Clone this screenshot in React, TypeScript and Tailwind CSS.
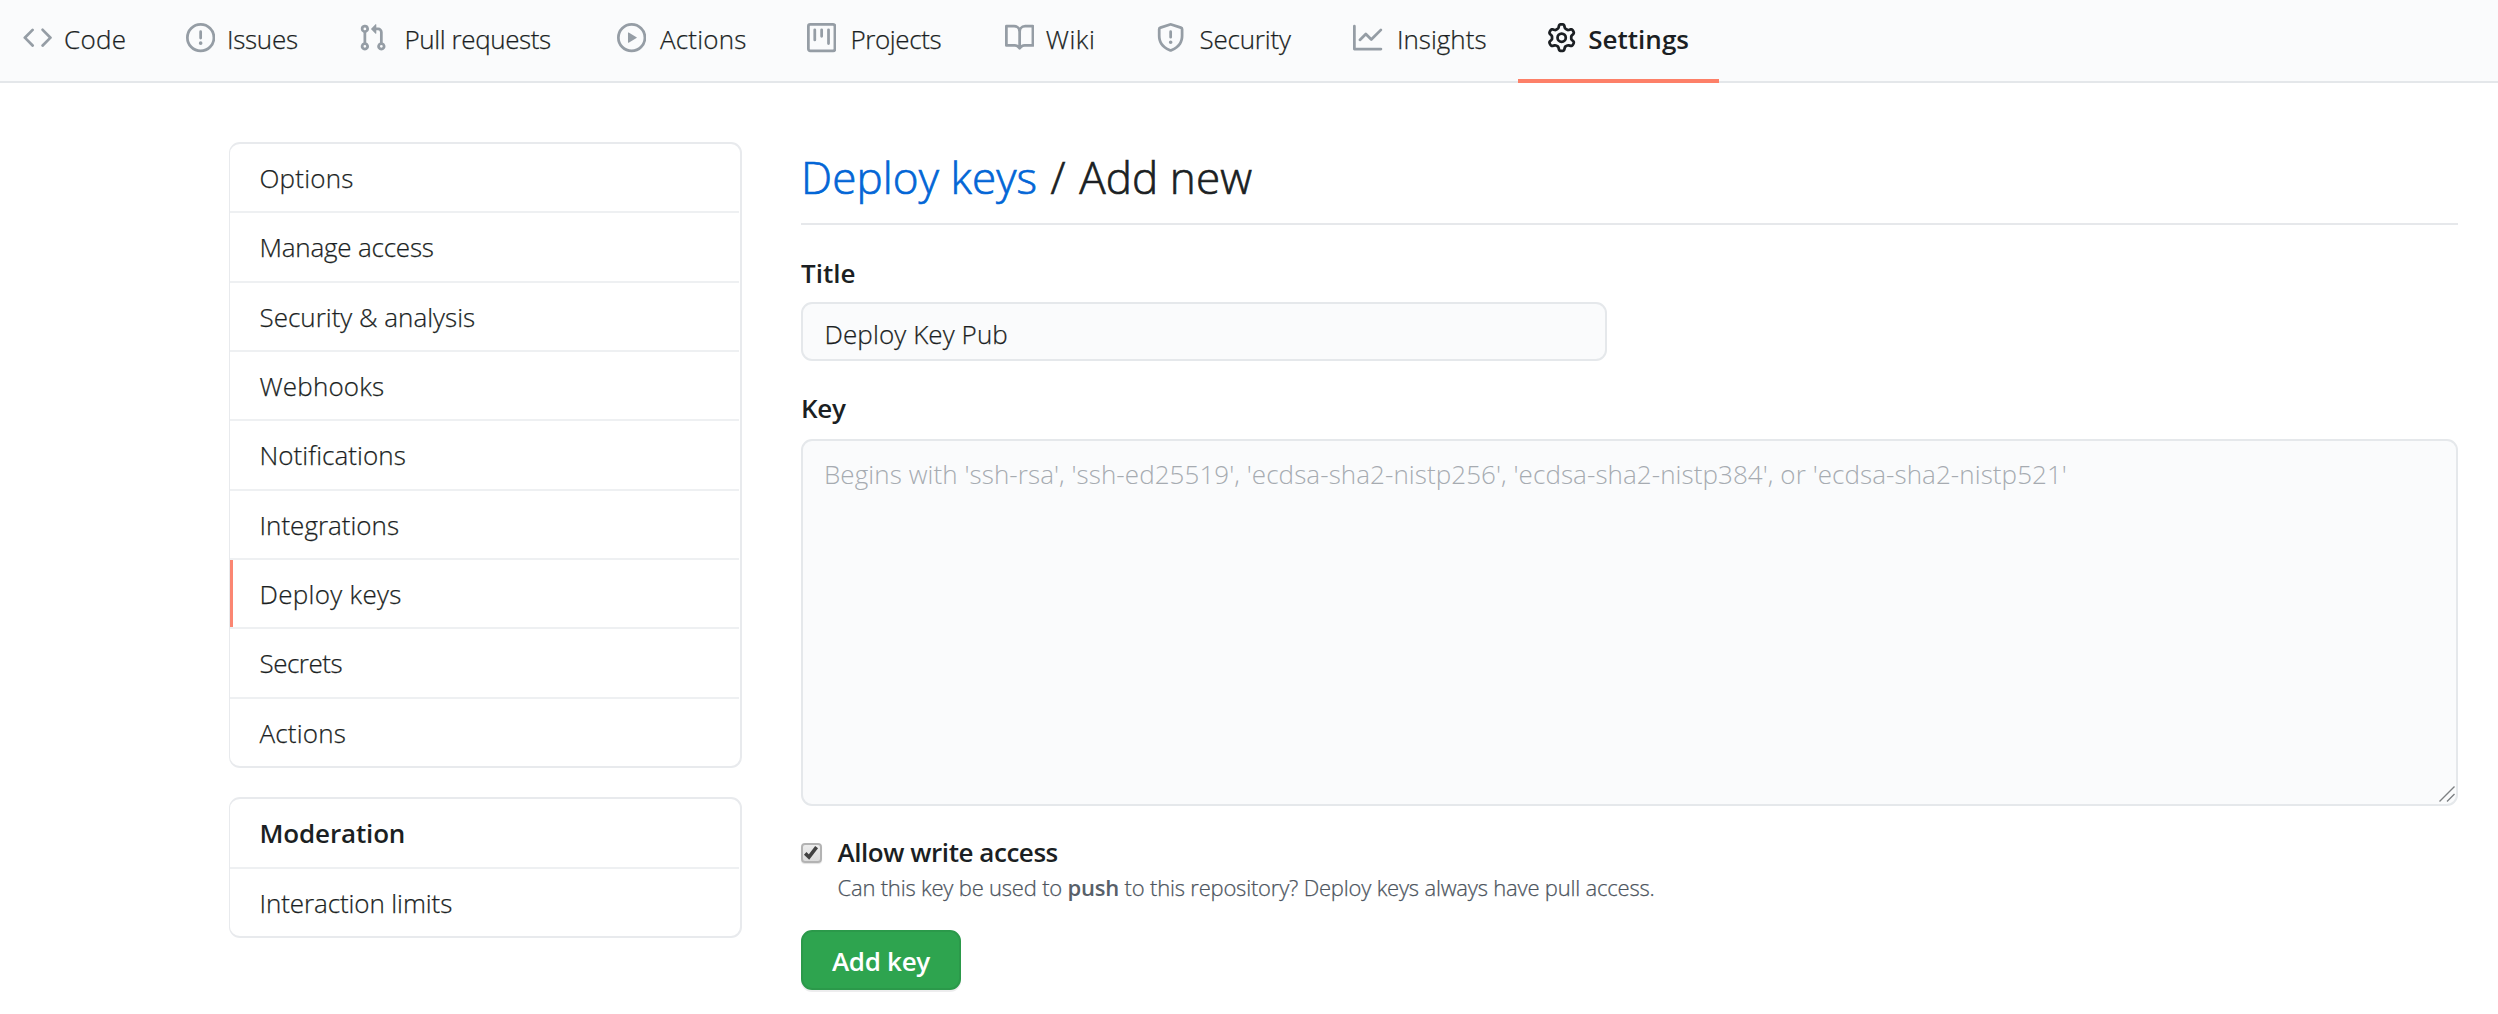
type Tab = { label: string; path: string; item: string; icon: string; text: string };

const tabs: Tab[] = [
  {
    label: "Code",
    item: "w-[163px]",
    icon: "mr-[11.7px]",
    text: "tracking-[0.3px]",
    path: "M4.72 3.22a.75.75 0 011.06 1.06L2.06 8l3.72 3.72a.75.75 0 11-1.06 1.06L.47 8.53a.75.75 0 010-1.06l4.25-4.25zm6.56 0a.75.75 0 10-1.06 1.06L13.94 8l-3.72 3.72a.75.75 0 101.06 1.06l4.25-4.25a.75.75 0 000-1.06l-4.25-4.25z",
  },
  {
    label: "Issues",
    item: "w-[171.5px]",
    icon: "mr-[11.7px]",
    text: "tracking-[-0.3px]",
    path: "M8 1.5a6.5 6.5 0 100 13 6.5 6.5 0 000-13zM0 8a8 8 0 1116 0A8 8 0 010 8zm9 3a1 1 0 11-2 0 1 1 0 012 0zm-.25-6.25a.75.75 0 00-1.5 0v3.5a.75.75 0 001.5 0v-3.5z",
  },
  {
    label: "Pull requests",
    item: "w-[259.5px]",
    icon: "mr-[17.7px]",
    text: "tracking-[-0.4px]",
    path: "M7.177 3.073L9.573.677A.25.25 0 0110 .854v4.792a.25.25 0 01-.427.177L7.177 3.427a.25.25 0 010-.354zM3.75 2.5a.75.75 0 100 1.5.75.75 0 000-1.5zm-2.25.75a2.25 2.25 0 113 2.122v5.256a2.251 2.251 0 11-1.5 0V5.372A2.25 2.25 0 011.5 3.25zM11 2.5h-1V4h1a1 1 0 011 1v5.628a2.251 2.251 0 101.5 0V5A2.5 2.5 0 0011 2.5zm1 10.25a.75.75 0 111.5 0 .75.75 0 01-1.5 0zM3.75 12a.75.75 0 100 1.5.75.75 0 000-1.5z",
  },
  {
    label: "Actions",
    item: "w-[189.5px]",
    icon: "mr-[13.7px]",
    text: "tracking-[0.2px]",
    path: "M1.5 8a6.5 6.5 0 1113 0 6.5 6.5 0 01-13 0zM8 0a8 8 0 100 16A8 8 0 008 0zM6.379 5.227A.25.25 0 006 5.442v5.117a.25.25 0 00.379.214l4.264-2.559a.25.25 0 000-.428L6.379 5.227z",
  },
  {
    label: "Projects",
    item: "w-[198px]",
    icon: "mr-[14.7px]",
    text: "tracking-[-0.4px]",
    path: "M1.75 0A1.75 1.75 0 000 1.75v12.5C0 15.216.784 16 1.75 16h12.5A1.75 1.75 0 0016 14.25V1.75A1.75 1.75 0 0014.25 0H1.75zM1.5 1.75a.25.25 0 01.25-.25h12.5a.25.25 0 01.25.25v12.5a.25.25 0 01-.25.25H1.75a.25.25 0 01-.25-.25V1.75zM11.75 3a.75.75 0 00-.75.75v7.5a.75.75 0 001.5 0v-7.5a.75.75 0 00-.75-.75zm-8.25.75a.75.75 0 011.5 0v5.5a.75.75 0 01-1.5 0v-5.5zM8 3a.75.75 0 00-.75.75v3.5a.75.75 0 001.5 0v-3.5A.75.75 0 008 3z",
  },
  {
    label: "Wiki",
    item: "w-[151.2px]",
    icon: "mr-[12px]",
    text: "tracking-[0.5px]",
    path: "M0 1.75A.75.75 0 01.75 1h4.253c1.227 0 2.317.59 3 1.501A3.744 3.744 0 0111.006 1h4.245a.75.75 0 01.75.75v10.5a.75.75 0 01-.75.75h-4.507a2.25 2.25 0 00-1.591.659l-.622.621a.75.75 0 01-1.06 0l-.622-.621A2.25 2.25 0 005.258 13H.75a.75.75 0 01-.75-.75V1.75zm8.755 3a2.25 2.25 0 012.25-2.25H14.5v9h-3.757c-.71 0-1.4.201-1.992.572l.004-7.322zm-1.504 7.324l.004-5.073-.002-2.253A2.25 2.25 0 005.003 2.5H1.5v9h3.757a3.75 3.75 0 011.994.574z",
  },
  {
    label: "Security",
    item: "w-[197.8px]",
    icon: "mr-[14.5px]",
    text: "tracking-[-0.2px]",
    path: "M7.467.133a1.75 1.75 0 011.066 0l5.25 1.68A1.75 1.75 0 0115 3.48V7c0 1.566-.32 3.182-1.303 4.682-.983 1.498-2.585 2.813-5.032 3.855a1.7 1.7 0 01-1.33 0c-2.447-1.042-4.049-2.357-5.032-3.855C1.32 10.182 1 8.566 1 7V3.48a1.75 1.75 0 011.217-1.667l5.25-1.68zm.61 1.429a.25.25 0 00-.153 0l-5.25 1.68a.25.25 0 00-.174.238V7c0 1.358.275 2.666 1.057 3.86.784 1.194 2.121 2.34 4.366 3.297a.2.2 0 00.154 0c2.245-.956 3.582-2.104 4.366-3.298C13.225 9.666 13.5 8.36 13.5 7V3.48a.25.25 0 00-.174-.237l-5.25-1.68zM9 10.5a1 1 0 11-2 0 1 1 0 012 0zm-.25-5.75a.75.75 0 10-1.5 0v3a.75.75 0 001.5 0v-3z",
  },
  {
    label: "Insights",
    item: "w-[164.5px]",
    icon: "mr-[14.2px]",
    text: "tracking-normal",
    path: "M1.5 1.75a.75.75 0 00-1.5 0v12.5c0 .414.336.75.75.75h14.5a.75.75 0 000-1.5H1.5V1.75zm14.28 2.53a.75.75 0 00-1.06-1.06L10 7.94 7.53 5.47a.75.75 0 00-1.06 0L3.22 8.72a.75.75 0 001.06 1.06L7 7.06l2.47 2.47a.75.75 0 001.06 0l5.25-5.25z",
  },
];

const gearPath =
  "M7.429 1.525a6.593 6.593 0 011.142 0c.036.003.108.036.137.146l.289 1.105c.147.56.55.967.997 1.189.174.086.341.183.501.29.417.278.97.423 1.53.27l1.102-.303c.11-.03.175.016.195.046.219.31.41.641.573.989.014.031.022.11-.059.19l-.815.806c-.411.406-.562.957-.53 1.456a4.588 4.588 0 010 .582c-.032.499.119 1.05.53 1.456l.815.806c.08.08.073.159.059.19a6.494 6.494 0 01-.573.99c-.02.029-.086.074-.195.045l-1.103-.303c-.559-.153-1.112-.008-1.529.27-.16.107-.327.204-.5.29-.449.222-.851.628-.998 1.189l-.289 1.105c-.029.11-.101.143-.137.146a6.613 6.613 0 01-1.142 0c-.036-.003-.108-.037-.137-.146l-.289-1.105c-.147-.56-.55-.967-.997-1.189a4.502 4.502 0 01-.501-.29c-.417-.278-.97-.423-1.53-.27l-1.102.303c-.11.03-.175-.016-.195-.046a6.492 6.492 0 01-.573-.989c-.014-.031-.022-.11.059-.19l.815-.806c.411-.406.562-.957.53-1.456a4.587 4.587 0 010-.582c.032-.499-.119-1.05-.53-1.456l-.815-.806c-.08-.08-.073-.159-.059-.19a6.44 6.44 0 01.573-.99c.02-.029.086-.075.195-.045l1.103.303c.559.153 1.112.008 1.529-.27.16-.107.327-.204.5-.29.449-.222.851-.628.998-1.189l.289-1.105c.029-.11.101-.143.137-.146zM8 0c-.236 0-.47.01-.701.03-.743.065-1.29.615-1.458 1.261l-.29 1.106c-.017.066-.078.158-.211.224a5.994 5.994 0 00-.668.386c-.123.082-.233.09-.3.071L3.27 2.776c-.644-.177-1.392.02-1.82.63a7.977 7.977 0 00-.704 1.217c-.315.675-.111 1.422.363 1.891l.815.806c.05.048.098.147.088.294a6.084 6.084 0 000 .772c.01.147-.038.246-.088.294l-.815.806c-.474.469-.678 1.216-.363 1.891.2.428.436.835.704 1.218.428.609 1.176.806 1.82.63l1.103-.303c.066-.019.176-.011.299.071.213.143.436.272.668.386.133.066.194.158.212.224l.289 1.106c.169.646.715 1.196 1.458 1.26a8.094 8.094 0 001.402 0c.743-.064 1.29-.614 1.458-1.26l.29-1.106c.017-.066.078-.158.211-.224a5.98 5.98 0 00.668-.386c.123-.082.233-.09.3-.071l1.102.302c.644.177 1.392-.02 1.82-.63.268-.382.505-.789.704-1.217.315-.675.111-1.422-.364-1.891l-.814-.806c-.05-.048-.098-.147-.088-.294a6.1 6.1 0 000-.772c-.01-.147.039-.246.088-.294l.814-.806c.475-.469.679-1.216.364-1.891a7.992 7.992 0 00-.704-1.218c-.428-.609-1.176-.806-1.82-.63l-1.103.303c-.066.019-.176.011-.299-.071a5.991 5.991 0 00-.668-.386c-.133-.066-.194-.158-.212-.224L10.16 1.29C9.99.645 9.444.095 8.701.031A8.094 8.094 0 008 0zm1.5 8a1.5 1.5 0 11-3 0 1.5 1.5 0 013 0zM11 8a3 3 0 11-6 0 3 3 0 016 0z";

const menu = [
  { label: "Options", text: "tracking-[0.2px]" },
  { label: "Manage access", text: "tracking-[-0.2px]" },
  { label: "Security & analysis", text: "tracking-normal" },
  { label: "Webhooks", text: "tracking-[0.15px]" },
  { label: "Notifications", text: "tracking-[0.05px]" },
  { label: "Integrations", text: "tracking-normal" },
  { label: "Deploy keys", text: "tracking-[0.3px]", selected: true },
  { label: "Secrets", text: "tracking-[-0.5px]" },
  { label: "Actions", text: "tracking-[0.2px]" },
];

function Octicon({ path, className }: { path: string; className: string }) {
  return (
    <svg viewBox="0 0 16 16" className={`size-[29.3px] shrink-0 fill-current ${className}`} aria-hidden="true">
      <path fillRule="evenodd" d={path} />
    </svg>
  );
}

function RepoNav() {
  return (
    <nav className="flex h-[83px] border-b-2 border-[#e4e7ea] bg-[#fafbfc] pl-[23px]">
      {tabs.map((t) => (
        <a key={t.label} className={`flex h-[76px] shrink-0 items-center ${t.item}`}>
          <Octicon path={t.path} className={`text-[#959da5] ${t.icon}`} />
          <span className={`pt-[2px] whitespace-nowrap ${t.text}`}>{t.label}</span>
        </a>
      ))}
      <a className="-mb-[2px] flex h-[83px] w-[201px] shrink-0 items-center border-b-4 border-[#fd8068] pb-[3px] pl-[29px] font-semibold [-webkit-text-stroke:0]">
        <Octicon path={gearPath} className="mr-[12px]" />
        <span className="pt-[2px]">Settings</span>
      </a>
    </nav>
  );
}

function Sidebar() {
  return (
    <aside className="flex w-[513px] shrink-0 flex-col gap-[29px]">
      <div className="h-[626px] overflow-hidden rounded-[11px] border-2 border-l border-[#e8eaed]">
        {menu.map((m) => (
          <a
            key={m.label}
            className="mr-px flex h-[69.33px] items-stretch border-b-2 border-[#eef0f2] last:border-b-0 last:pb-[2px]"
          >
            <span className={m.selected ? "w-[3px] bg-[#fb8672]" : "w-[3px]"} />
            <span className={`flex items-center pt-[2px] pl-[26.5px] ${m.text}`}>{m.label}</span>
          </a>
        ))}
      </div>
      <div className="h-[141px] overflow-hidden rounded-[11px] border-2 border-l border-[#e8eaed]">
        <div className="mr-px flex h-[70px] items-center border-b-2 border-[#eef0f2] pt-px pl-[29.5px] font-semibold tracking-[-0.15px] [-webkit-text-stroke:0]">
          Moderation
        </div>
        <a className="flex h-[67px] items-center pt-[2px] pl-[29.5px] tracking-[-0.1px]">Interaction limits</a>
      </div>
    </aside>
  );
}

function DeployKeyForm() {
  return (
    <main className="ml-[59px] flex w-[1657px] shrink-0 flex-col">
      <h2 className="h-[83px] border-b-2 border-[#e6e8eb] pt-px text-[44px] leading-[68px] tracking-[0.1px] [-webkit-text-stroke:0.7px]">
        <a className="mr-[2px] text-[#0366d6]">Deploy keys</a> / <span className="ml-[2px]">Add new</span>
      </h2>

      <label htmlFor="key-title" className="mt-[28px] leading-[40px] font-semibold [-webkit-text-stroke:0]">
        Title
      </label>
      <input
        id="key-title"
        defaultValue="Deploy Key Pub"
        className="mt-[9px] h-[59px] w-[806px] rounded-[11px] border-2 border-[#e5e8eb] bg-[#fafbfc] pt-[4px] pl-[21.5px] tracking-[0.1px] outline-none"
      />

      <label htmlFor="key-body" className="mt-[27px] leading-[40px] font-semibold tracking-[-0.3px] [-webkit-text-stroke:0]">
        Key
      </label>
      <div className="relative mt-[11px] h-[367px]">
        <textarea
          id="key-body"
          placeholder="Begins with 'ssh-rsa', 'ssh-ed25519', 'ecdsa-sha2-nistp256', 'ecdsa-sha2-nistp384', or 'ecdsa-sha2-nistp521'"
          className="block h-full w-full resize-none rounded-[11px] border-2 border-[#e5e8eb] bg-[#fafbfc] pt-[14px] pl-[21px] leading-[38px] tracking-[0.07px] outline-none [-webkit-text-stroke:0] placeholder:text-[#a6abb1]"
        />
        <svg viewBox="0 0 16 16" className="absolute right-[3px] bottom-[4px] size-4" fill="none" stroke="#7d8083" strokeWidth="1.4">
          <path d="M0.5 15.5 15.5 0.5M8 15.5 15.5 8" />
        </svg>
      </div>

      <div className="mt-[25px] flex">
        <span className="mt-[11.5px] flex size-[20.5px] items-center justify-center rounded-[4px] border-2 border-[#b3b3b3] bg-linear-to-b from-[#ededed] to-[#dcdcdc] shadow-[0_1px_1px_rgba(0,0,0,0.12)]">
          <svg viewBox="0 0 16 16" className="size-4" fill="none" stroke="#424242" strokeWidth="3.6">
            <path d="M2.2 8.4 6 12 13.6 2.2" />
          </svg>
        </span>
        <div className="ml-[16px] flex flex-col">
          <span className="pt-px leading-[40px] font-semibold tracking-[-0.45px] [-webkit-text-stroke:0]">Allow write access</span>
          <span className="-mt-px text-[22px] leading-[32px] tracking-[-0.2px] text-[#4d555e]">
            Can this key be used to <strong className="font-semibold text-[#586069] [-webkit-text-stroke:0]">push</strong> to this repository? Deploy keys always have pull
            access.
          </span>
        </div>
      </div>

      <button className="mt-[27px] h-[60px] w-[160px] rounded-[11px] border-2 border-[#2b994a] bg-[#2ea44f] pt-[2px] text-center font-semibold tracking-[-0.3px] text-white shadow-[0_2px_0_rgba(27,31,35,0.08)] [-webkit-text-stroke:0]">
        Add key
      </button>
    </main>
  );
}

export default function App() {
  return (
    <div className="h-[1014px] w-[2498px] overflow-hidden bg-white font-['Open_Sans','Noto_Sans',sans-serif] text-[26px] font-light text-[#1b1f23] [-webkit-text-stroke:0.25px]">
      <RepoNav />
      <div className="flex items-start pt-[59px] pl-[229px]">
        <Sidebar />
        <DeployKeyForm />
      </div>
    </div>
  );
}
